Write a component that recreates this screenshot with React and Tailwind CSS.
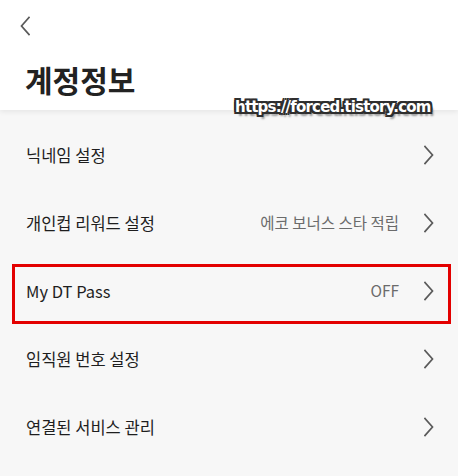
import { useState } from 'react'

const FONT = { fontFamily: "'Noto Sans CJK KR', 'Noto Sans', sans-serif" }

const items = [
  { label: '닉네임 설정' },
  { label: '개인컵 리워드 설정', value: '에코 보너스 스타 적립' },
  { label: 'My DT Pass', value: 'OFF', marked: true },
  { label: '임직원 번호 설정' },
  { label: '연결된 서비스 관리' },
]

function Chevron({ left = false }) {
  return (
    <svg width="10" height="20" viewBox="0 0 10 20" fill="none" stroke="#5a5a5a" strokeWidth="1.7" strokeLinecap="square">
      {left ? <polyline points="9,1.5 1.5,10 9,18.5" /> : <polyline points="1,1.5 8.5,10 1,18.5" />}
    </svg>
  )
}

function Row({ label, value, marked }) {
  return (
    <div className="relative flex h-[68px] items-center pl-[26px] pr-[24px]">
      <span className="flex-1 text-[16.5px] text-[#1e1e1e]">{label}</span>
      {value && <span className="mr-[25px] text-[15.5px] text-[#6b6b6b]">{value}</span>}
      <Chevron />
      {/* annotation box */}
      {marked && (
        <div className="absolute left-[12px] right-[7px] top-[7px] bottom-[1px] border-[3px] border-[#e30000]" />
      )}
    </div>
  )
}

export default function App() {
  const [active] = useState(null)

  return (
    <div className="min-h-[476px] w-[458px] overflow-hidden bg-[#f7f7f7]" style={FONT}>
      <div className="relative z-10 h-[110px] bg-white shadow-[0_2px_5px_rgba(0,0,0,0.07)]">
        <div className="pl-[20px] pt-[16px]">
          <Chevron left />
        </div>
        <h1 className="mt-[23px] pl-[25px] text-[30px] font-bold leading-[40px] text-[#222]">계정정보</h1>
        <span
          className="absolute left-[235px] top-[96px] text-[15px] font-bold tracking-[-0.8px] text-white"
          style={{
            fontFamily: "'DejaVu Sans', sans-serif",
            textShadow:
              '-2px -2px 0 #2e2e2e, 2px -2px 0 #2e2e2e, -2px 2px 0 #2e2e2e, 2px 2px 0 #2e2e2e, 0 -2px 0 #2e2e2e, 0 2px 0 #2e2e2e, -2px 0 0 #2e2e2e, 2px 0 0 #2e2e2e, 3px 4px 2px rgba(0,0,0,0.4)',
          }}
        >
          https://forced.tistory.com
        </span>
      </div>
      <div className="pt-[11px]">
        {items.map((it) => (
          <Row key={it.label} {...it} active={active === it.label} />
        ))}
      </div>
    </div>
  )
}
